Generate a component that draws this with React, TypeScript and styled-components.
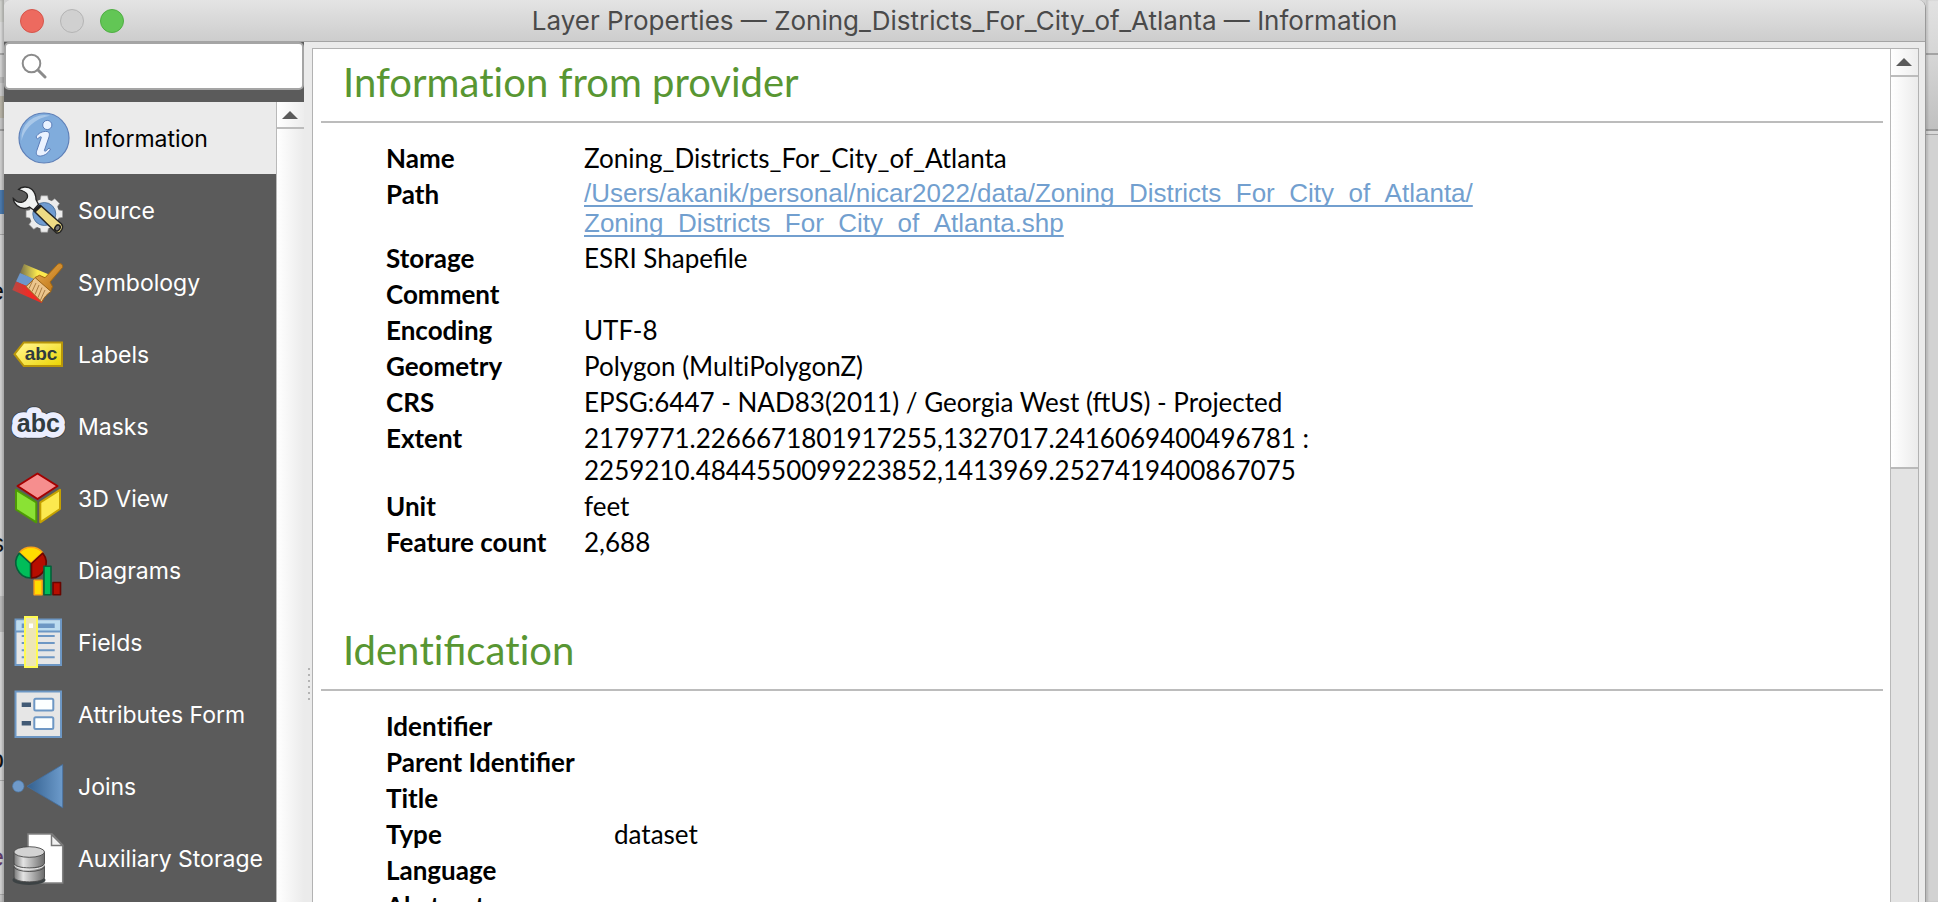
import React from "react";
import styled, { createGlobalStyle, css } from "styled-components";

const GlobalStyle = createGlobalStyle`
  *, *::before, *::after { box-sizing: border-box; }
  html, body { margin: 0; height: 100%; overflow: hidden; background: #d2d2d2; }
  button, input { font: inherit; }
`;

const uiFont = `Inter, "Liberation Sans", sans-serif`;
const textFont = `Lato, "Liberation Sans", sans-serif`;
const linkFont = `"Liberation Sans", Arial, sans-serif`;

/* ---------- Desktop and window frame ---------- */

const Desktop = styled.div`
  display: flex;
  height: 100vh;
  overflow: hidden;
`;

const BackStrip = styled.div<{ $side: "left" | "right" }>`
  position: relative;
  flex: none;
  overflow: hidden;
  width: ${(p) => (p.$side === "left" ? 4 : 12)}px;
  background: ${(p) =>
    p.$side === "left"
      ? `linear-gradient(#cfd0cc 0 22px, #d8d8d8 22px 53px, #a5a5a5 53px 55px, #d0d0d0 55px 77px, #b9b9b9 77px 83px, #c8c8c8 83px 96px, #b5b1a4 96px 118px, #c2c2c2 118px 129px, #9a9a9a 129px 131px, #cbcbcb 131px 190px, #4a78ab 190px 214px, #cbcbcb 214px 234px, #a3a3a3 234px 235px, #cfcfcf 235px 596px, #b9b9b9 596px 632px, #d2d2d2 632px 780px, #a8a8a8 780px 781px, #d0d0d0 781px 894px, #a8a8a8 894px 895px, #c4c4c4 895px)`
      : `linear-gradient(#e2e2e2 0, #d6d6d6 53px, #a3a3a3 53px 55px, #d6d6d6 55px, #c0c0c0 129px, #999 129px 131px, #d9d9d9 131px 134px, #a3a3a3 134px 135px, #d2d2d2 135px)`};
  box-shadow: ${(p) =>
    p.$side === "left"
      ? "inset -2px 0 2px rgba(0,0,0,.18)"
      : "inset 2px 0 2px rgba(0,0,0,.12)"};
`;

const HiddenLetter = styled.span<{ $y: number; $color?: string }>`
  position: absolute;
  right: 0;
  top: ${(p) => p.$y}px;
  font: 26px/30px ${linkFont};
  color: ${(p) => p.$color ?? "#111"};
`;

const Window = styled.main`
  flex: 1;
  min-width: 0;
  display: flex;
  flex-direction: column;
  background: #ebebeb;
  border-right: 1px solid #999;
  border-radius: 8px 8px 0 0;
  overflow: hidden;
`;

const TitleBar = styled.header`
  flex: none;
  display: grid;
  grid-template-columns: 120px 1fr 120px;
  align-items: center;
  height: 42px;
  background: linear-gradient(#e4e4e4, #cdcdcd);
  border-bottom: 1px solid #a4a4a4;
`;

const Lights = styled.div`
  display: flex;
  gap: 16px;
  padding-left: 16px;
`;

const Light = styled.button<{ $fill: string; $edge: string }>`
  width: 24px;
  height: 24px;
  padding: 0;
  border-radius: 50%;
  border: 1px solid ${(p) => p.$edge};
  background: ${(p) => p.$fill};
`;

const WindowTitle = styled.h1`
  margin: 0;
  text-align: center;
  font: 400 26px/30px ${uiFont};
  color: #4a4a4a;
  white-space: nowrap;
`;

const Body = styled.div`
  flex: 1;
  min-height: 0;
  display: flex;
`;

/* ---------- Sidebar ---------- */

const Sidebar = styled.aside`
  flex: none;
  width: 300px;
  display: flex;
  flex-direction: column;
  background: #5b5b5b;
`;

const SearchBox = styled.label`
  flex: none;
  display: flex;
  align-items: center;
  gap: 8px;
  height: 48px;
  margin-bottom: 12px;
  padding-left: 15px;
  background: #fff;
  border: 2px solid #a5a5a5;
  border-radius: 5px;
`;

const SearchInput = styled.input`
  flex: 1;
  min-width: 0;
  border: 0;
  outline: 0;
  background: transparent;
  font: 22px/28px ${uiFont};
`;

const NavArea = styled.div`
  flex: 1;
  min-height: 0;
  display: flex;
`;

const NavList = styled.nav`
  flex: 1;
  min-width: 0;
  overflow: hidden;
`;

const NavItem = styled.button<{ $active?: boolean }>`
  display: flex;
  align-items: center;
  gap: 12px;
  width: 100%;
  height: 72px;
  padding: 0 0 0 6px;
  border: 0;
  background: transparent;
  color: #fff;
  font: 400 23px/28px ${uiFont};
  text-align: left;
  white-space: nowrap;
  ${(p) =>
    p.$active &&
    css`
      padding-left: 12px;
      background: #ebebeb;
      color: #000;
    `}
`;

const NavLabel = styled.span`
  padding-top: 2px;
`;

const Icon = styled.svg`
  flex: none;
  width: 56px;
  height: 56px;
  overflow: visible;
`;

const Splitter = styled.div`
  flex: none;
  width: 8px;
  padding: 626px 0 0 4px;
`;

const SplitGrip = styled.div`
  display: flex;
  flex-direction: column;
  gap: 4px;
`;

const GripDot = styled.i`
  width: 2px;
  height: 2px;
  background: #b4b4b4;
`;

/* ---------- Scroll bars ---------- */

const ScrollBar = styled.div`
  flex: none;
  width: 28px;
  display: flex;
  flex-direction: column;
  background: #e3e3e3;
  border-left: 1px solid #b9b9b9;
`;

const ScrollButton = styled.button<{ $tall?: boolean }>`
  flex: none;
  display: flex;
  align-items: center;
  justify-content: center;
  height: ${(p) => (p.$tall ? 28 : 27)}px;
  padding: 0 1px 0 0;
  border: 0;
  border-bottom: 2px solid #bcbcbc;
  background: linear-gradient(90deg, #fff, #ededed);
`;

const ScrollThumb = styled.div<{ $part: string }>`
  flex: 0 0 ${(p) => p.$part};
  background: linear-gradient(90deg, #fff, #ebebeb);
  border-bottom: 2px solid #b9b9b9;
`;

/* ---------- Information viewer ---------- */

const Viewer = styled.section`
  flex: 1;
  min-width: 0;
  display: flex;
  margin: 6px 6px 0 0;
  background: #fff;
  border: 1px solid #b2b2b2;
  border-bottom: 0;
`;

const Document = styled.div`
  flex: 1;
  min-width: 0;
  padding: 9px 7px 0 8px;
  overflow: hidden;
`;

const SectionTitle = styled.h2`
  margin: 0;
  padding: 0 0 15px 22px;
  border-bottom: 2px solid #bcbcbc;
  font: 400 40px/48px ${textFont};
  color: #589632;
`;

const Facts = styled.table`
  margin: 15px 0 64px 65px;
  border-collapse: separate;
  border-spacing: 0 4px;
  font: 400 26px/32px ${textFont};
  color: #000;
`;

const Key = styled.th<{ $wide?: boolean }>`
  width: ${(p) => (p.$wide ? 228 : 198)}px;
  height: 32px;
  padding: 0;
  font-weight: 700;
  text-align: left;
  vertical-align: top;
  white-space: nowrap;
`;

const Value = styled.td`
  padding: 0;
  vertical-align: top;
`;

const Unjoined = styled.span`
  font-variant-ligatures: none;
`;

const PathLink = styled.a`
  display: block;
  font: 400 26px/30px ${linkFont};
  color: #729fcf;
  text-decoration: underline;
  text-decoration-thickness: 2px;
  text-underline-offset: 3px;
  text-decoration-skip-ink: none;
`;

/* ---------- Icons ---------- */

const InfoIcon = () => (
  <Icon viewBox="0 0 56 56">
    <circle cx="28" cy="28" r="25" fill="#80acdc" stroke="#5f80b8" strokeWidth="1.2" />
    <path d="M5.500 31 A23 23 0 0 1 34 5.800 C22 8 10 15 5.500 31Z" fill="#a9c8e9" />
    <g fill="#eaf2ff" stroke="#5b7db8" strokeWidth="1">
      <circle cx="31.300" cy="15" r="4.600" />
      <path d="M20 27 C22 23 27 21 31 21.500 C34 22 33.500 25 33 27 L28.500 40 C28 42 30 41.500 33 38 L34.500 39 C32 44 27 46.500 23 46 C20 45.500 20 43 20.800 40.500 L25.300 27.500 C25.500 26 23.500 27 21.500 29 Z" />
    </g>
  </Icon>
);

const SourceIcon = () => (
  <Icon viewBox="0 0 56 56">
    <g fill="#ececec" stroke="#9a9a9a" strokeWidth=".6">
      {[0, 45, 90, 135, 180, 225, 270, 315].map((a) => (
        <path key={a} d="M29.800 20 L31 13.800 H37.600 L38.800 20Z" transform={`rotate(${a} 34.300 32)`} />
      ))}
    </g>
    <circle cx="34.300" cy="32" r="14.800" fill="#ececec" />
    <circle cx="34.300" cy="32" r="11.500" fill="#6f9bd0" stroke="#44688f" strokeWidth=".8" />
    <path
      d="M8.500 7.500 C11 4.500 18 3.800 22 7.500 C25 10.500 26 14 26 17.500 L28.500 22.500 L23.500 28 L19.500 25 C15 27.500 10 26 7 23.500 C5 21.500 3.300 19 3.300 16.500 C6 19.500 10 21 13 19.800 C16.500 18 18.500 15 17 12 C15.500 9.500 12 8.500 8.500 7.500Z"
      fill="#f1f3f3"
      stroke="#242424"
      strokeWidth="1.300"
    />
    <path d="M24 29 L30.500 23.500 L51.500 42 C54 45 51.500 51.500 46.500 51 Z" fill="#eedb84" stroke="#242424" strokeWidth="1.400" />
    <path d="M23.500 28 L29.500 22.500 L31.800 24.600 L25.500 30.500Z" fill="#1f1f1f" />
    <ellipse cx="47.500" cy="46" rx="2.400" ry="3.200" transform="rotate(35 47.500 46)" fill="#777" stroke="#1f1f1f" strokeWidth="1.500" />
  </Icon>
);

const SymbologyIcon = () => (
  <Icon viewBox="0 0 56 56">
    <defs>
      <linearGradient id="sym-y">
        <stop offset="0" stopColor="#77704a" />
        <stop offset=".6" stopColor="#fbe94e" />
      </linearGradient>
      <linearGradient id="sym-r">
        <stop offset="0" stopColor="#b44a44" />
        <stop offset=".5" stopColor="#ef2b25" />
      </linearGradient>
      <linearGradient id="sym-h" x1="0" y1="0" x2="1" y2="1">
        <stop offset="0" stopColor="#e9ad55" />
        <stop offset="1" stopColor="#b96f0c" />
      </linearGradient>
    </defs>
    <path d="M14 10 L39 20.500 L36 31 L10 19Z" fill="url(#sym-y)" />
    <path d="M10 19 L36 30 L32 39 L6 27.500Z" fill="#6d97cb" />
    <path d="M6 27.500 L36 40 L31.700 49 L2.300 36Z" fill="url(#sym-r)" />
    <path d="M47.500 10.500 C49.500 8.500 53.500 10 52.500 13.500 L40 28 L42.500 32.500 L40.500 38 L25 23.500 L29.500 21.300 L35 23.800Z" fill="url(#sym-h)" stroke="#a4670f" strokeWidth="1" />
    <path d="M25 23.500 C22 27.500 20 29 16 32.500 L31.700 48 C34 43.500 37 40 41 37.500Z" fill="#ecc58c" stroke="#9d6516" strokeWidth="1" />
    <path d="M22.500 27 L19 34.500 M26 29 L22 37.500 M29 31 L25 40.500 M32 33.500 L28 43.500 M35 36 L30.500 46" stroke="#a97d45" strokeWidth="1" />
  </Icon>
);

const LabelsIcon = () => (
  <Icon viewBox="0 0 56 56">
    <defs>
      <linearGradient id="lab" x1="0" y1="0" x2="1" y2="1">
        <stop offset=".2" stopColor="#fff27c" />
        <stop offset="1" stopColor="#ead400" />
      </linearGradient>
    </defs>
    <path d="M4.500 28.200 L13.800 16.500 H52 V40 H13.800Z" fill="url(#lab)" stroke="#b8960a" strokeWidth="2" />
    <text x="31" y="34" textAnchor="middle" fontFamily="Liberation Sans" fontWeight="700" fontSize="19" fill="#2f3b3f">abc</text>
  </Icon>
);

const MasksIcon = () => (
  <Icon viewBox="0 0 56 56">
    <g textAnchor="middle" fontFamily="Liberation Sans" fontWeight="700" fontSize="25" strokeLinejoin="round">
      <text x="28.300" y="34" fill="#2f3b3f" stroke="#343b44" strokeWidth="13">abc</text>
      <text x="28.300" y="34" fill="#2f3b3f" stroke="#ebeefe" strokeWidth="11.500">abc</text>
      <text x="28.300" y="34" fill="#2f3b3f">abc</text>
    </g>
  </Icon>
);

const CubeIcon = () => (
  <Icon viewBox="0 0 56 56">
    <g strokeWidth="2" strokeLinejoin="round">
      <path d="M27.500 3.500 L47.500 16 L27.500 29 L7.500 16Z" fill="#f68e8e" stroke="#a40000" />
      <path d="M6 19.800 L26.300 32.300 V52.300 L6 39.500Z" fill="#8ae234" stroke="#4e9a06" />
      <path d="M30.300 32.300 L50 19.800 V39 L30.300 52.300Z" fill="#fce94f" stroke="#c4a000" />
    </g>
  </Icon>
);

const DiagramsIcon = () => (
  <Icon viewBox="0 0 56 56">
    <g strokeWidth="1.600" strokeLinejoin="round">
      <path d="M21 21 L9.500 10.500 A15.300 15.300 0 0 1 32.500 10.500Z" fill="#ffdc00" stroke="#fca414" />
      <path d="M20.500 21.500 V36 A15.300 15.300 0 0 1 9.200 11.200Z" fill="#00bd59" stroke="#03613a" />
      <path d="M21.500 21.500 V36 A15.300 15.300 0 0 0 32.800 11.200Z" fill="#b70d00" stroke="#690600" />
      <path d="M24.200 38.200 H32 V52.800 H24.200Z" fill="#ffdc00" stroke="#fca414" />
      <path d="M43 40.500 H50.500 V52.800 H43Z" fill="#b70d00" stroke="#690600" />
      <path d="M34 24.200 H41 V52.800 H34Z" fill="#00bd59" stroke="#03613a" />
    </g>
  </Icon>
);

const FieldsIcon = () => (
  <Icon viewBox="0 0 56 56">
    <rect x="5.500" y="5.500" width="45.500" height="45.500" fill="#e6e6e6" stroke="#6d97c4" strokeWidth="2" />
    <rect x="6.500" y="6.500" width="43.500" height="10.500" fill="#bddcf0" />
    <path d="M5 17.500 H51" stroke="#6d97c4" strokeWidth="2" />
    <path d="M11.700 11.700 H44.700" stroke="#6d97c4" strokeWidth="4.600" />
    <path d="M11.700 22 H44.700 M11.700 29 H44.700 M11.700 36.200 H44.700 M11.700 43.200 H44.700" stroke="#6d97c4" strokeWidth="2" />
    <rect x="15" y="3" width="12" height="50" fill="#eee6b5" stroke="#fffb52" strokeWidth="2" />
    <rect x="19" y="9.500" width="4" height="4.500" fill="#fff" />
  </Icon>
);

const FormIcon = () => (
  <Icon viewBox="0 0 56 56">
    <rect x="5.500" y="5.500" width="45.500" height="45.500" fill="#e6e6e6" stroke="#6d97c4" strokeWidth="2" />
    <path d="M11.700 18.700 H21 M11.700 37.300 H21" stroke="#415a75" strokeWidth="4.600" />
    <g fill="#fcffff" stroke="#6d97c4" strokeWidth="2">
      <rect x="24.300" y="12.700" width="19" height="11.800" rx="1.500" />
      <rect x="24.300" y="31.300" width="19" height="11.800" rx="1.500" />
    </g>
  </Icon>
);

const JoinsIcon = () => (
  <Icon viewBox="0 0 56 56">
    <defs>
      <linearGradient id="join">
        <stop offset="0" stopColor="#33608f" />
        <stop offset="1" stopColor="#6d9bcb" />
      </linearGradient>
    </defs>
    <circle cx="8.300" cy="28.300" r="5.700" fill="#6f9aca" stroke="#4f7dae" strokeWidth=".7" />
    <path d="M17 28.300 L52.700 6.500 V49.800Z" fill="url(#join)" stroke="#426f9f" strokeWidth=".8" />
  </Icon>
);

const StorageIcon = () => (
  <Icon viewBox="0 0 56 56">
    <defs>
      <linearGradient id="disk">
        <stop offset="0" stopColor="#777" />
        <stop offset=".3" stopColor="#e4e4e4" />
        <stop offset="1" stopColor="#6b6b6b" />
      </linearGradient>
    </defs>
    <path d="M18 4 H42 L52.700 15 V53 H18Z" fill="#fff" stroke="#828282" strokeWidth="1.500" />
    <path d="M41.500 4.500 V15.500 H52.500Z" fill="#f1f1f1" stroke="#777" strokeWidth="1.500" />
    <ellipse cx="19" cy="50" rx="16.500" ry="5" fill="#3c4244" />
    <g fill="url(#disk)" stroke="#474747" strokeWidth=".9">
      <path d="M4 37 V47 C4 53.500 34.500 53.500 34.500 47 V37Z" />
      <ellipse cx="19.200" cy="36.500" rx="15.300" ry="5" />
      <path d="M4 22 V33 C4 39.500 34.500 39.500 34.500 33 V22Z" />
      <ellipse cx="19.200" cy="22" rx="15.300" ry="5.300" fill="#d3d3d3" />
    </g>
    <path d="M4.500 35.500 C8 40.500 31 40.500 34 35.500" fill="none" stroke="#ededed" strokeWidth="1" />
  </Icon>
);

const SearchGlyph = () => (
  <svg width="26" height="26" viewBox="0 0 26 26" fill="none" stroke="#8b8b8b">
    <circle cx="10.500" cy="10.500" r="8.800" strokeWidth="2" />
    <path d="M17 17 L24 24" strokeWidth="3" strokeLinecap="round" />
  </svg>
);

const UpArrow = () => (
  <svg width="16" height="8" viewBox="0 0 16 8">
    <path d="M0 8 L8 0 L16 8Z" fill="#5a5a5a" />
  </svg>
);

/* ---------- Data ---------- */

const pages: { label: string; icon: React.ComponentType }[] = [
  { label: "Information", icon: InfoIcon },
  { label: "Source", icon: SourceIcon },
  { label: "Symbology", icon: SymbologyIcon },
  { label: "Labels", icon: LabelsIcon },
  { label: "Masks", icon: MasksIcon },
  { label: "3D View", icon: CubeIcon },
  { label: "Diagrams", icon: DiagramsIcon },
  { label: "Fields", icon: FieldsIcon },
  { label: "Attributes Form", icon: FormIcon },
  { label: "Joins", icon: JoinsIcon },
  { label: "Auxiliary Storage", icon: StorageIcon },
];

type Fact = [string, React.ReactNode];

const provider: Fact[] = [
  ["Name", "Zoning_Districts_For_City_of_Atlanta"],
  [
    "Path",
    <PathLink href="#path">
      /Users/akanik/personal/nicar2022/data/Zoning_Districts_For_City_of_Atlanta/
      <br />
      Zoning_Districts_For_City_of_Atlanta.shp
    </PathLink>,
  ],
  ["Storage", "ESRI Shapefile"],
  ["Comment", ""],
  ["Encoding", "UTF-8"],
  ["Geometry", "Polygon (MultiPolygonZ)"],
  ["CRS", "EPSG:6447 - NAD83(2011) / Georgia West (ftUS) - Projected"],
  [
    "Extent",
    <>
      2179771.2266671801917255,1327017.2416069400496781 :
      <br />
      2259210.4844550099223852,1413969.2527419400867075
    </>,
  ],
  ["Unit", "feet"],
  ["Feature count", "2,688"],
];

const identification: Fact[] = [
  ["Identifier", ""],
  ["Parent Identifier", ""],
  ["Title", ""],
  ["Type", "dataset"],
  ["Language", ""],
  ["Abstract", ""],
];

/* Keeps "ti" as two letters while "fi" still joins. */
const Words = ({ text }: { text: string }) => (
  <>
    {text.split(/(ti)/).map((part, i) =>
      part === "ti" ? <Unjoined key={i}>{part}</Unjoined> : part
    )}
  </>
);

const FactTable = ({ rows, wide }: { rows: Fact[]; wide?: boolean }) => (
  <Facts>
    <tbody>
      {rows.map(([key, value]) => (
        <tr key={key}>
          <Key scope="row" $wide={wide}>
            <Words text={key} />
          </Key>
          <Value>{typeof value === "string" ? <Words text={value} /> : value}</Value>
        </tr>
      ))}
    </tbody>
  </Facts>
);

export default function App() {
  return (
    <>
      <GlobalStyle />
      <Desktop>
        <BackStrip $side="left" aria-hidden="true">
          <HiddenLetter $y={276}>e</HiddenLetter>
          <HiddenLetter $y={528}>s</HiddenLetter>
          <HiddenLetter $y={744}>p</HiddenLetter>
          <HiddenLetter $y={842} $color="#5c3a66">e</HiddenLetter>
        </BackStrip>
        <Window>
          <TitleBar>
            <Lights>
              <Light aria-label="Close" $fill="#ed6a5f" $edge="#d5554b" />
              <Light aria-label="Minimize" $fill="#d0d0d0" $edge="#b4b4b4" />
              <Light aria-label="Zoom" $fill="#62c655" $edge="#4fae43" />
            </Lights>
            <WindowTitle>Layer Properties — Zoning_Districts_For_City_of_Atlanta — Information</WindowTitle>
          </TitleBar>
          <Body>
            <Sidebar>
              <SearchBox>
                <SearchGlyph />
                <SearchInput type="search" aria-label="Search" />
              </SearchBox>
              <NavArea>
                <NavList>
                  {pages.map(({ label, icon: Glyph }, i) => (
                    <NavItem key={label} $active={i === 0}>
                      <Glyph />
                      <NavLabel>{label}</NavLabel>
                    </NavItem>
                  ))}
                </NavList>
                <ScrollBar>
                  <ScrollButton aria-label="Scroll up">
                    <UpArrow />
                  </ScrollButton>
                  <ScrollThumb $part="100%" />
                </ScrollBar>
              </NavArea>
            </Sidebar>
            <Splitter>
              <SplitGrip>
                {[0, 1, 2, 3, 4, 5].map((n) => (
                  <GripDot key={n} />
                ))}
              </SplitGrip>
            </Splitter>
            <Viewer>
              <Document>
                <SectionTitle>
                  <Words text="Information from provider" />
                </SectionTitle>
                <FactTable rows={provider} />
                <SectionTitle>
                  <Words text="Identification" />
                </SectionTitle>
                <FactTable rows={identification} wide />
              </Document>
              <ScrollBar>
                <ScrollButton $tall aria-label="Scroll up">
                  <UpArrow />
                </ScrollButton>
                <ScrollThumb $part="46%" />
              </ScrollBar>
            </Viewer>
          </Body>
        </Window>
        <BackStrip $side="right" aria-hidden="true" />
      </Desktop>
    </>
  );
}
